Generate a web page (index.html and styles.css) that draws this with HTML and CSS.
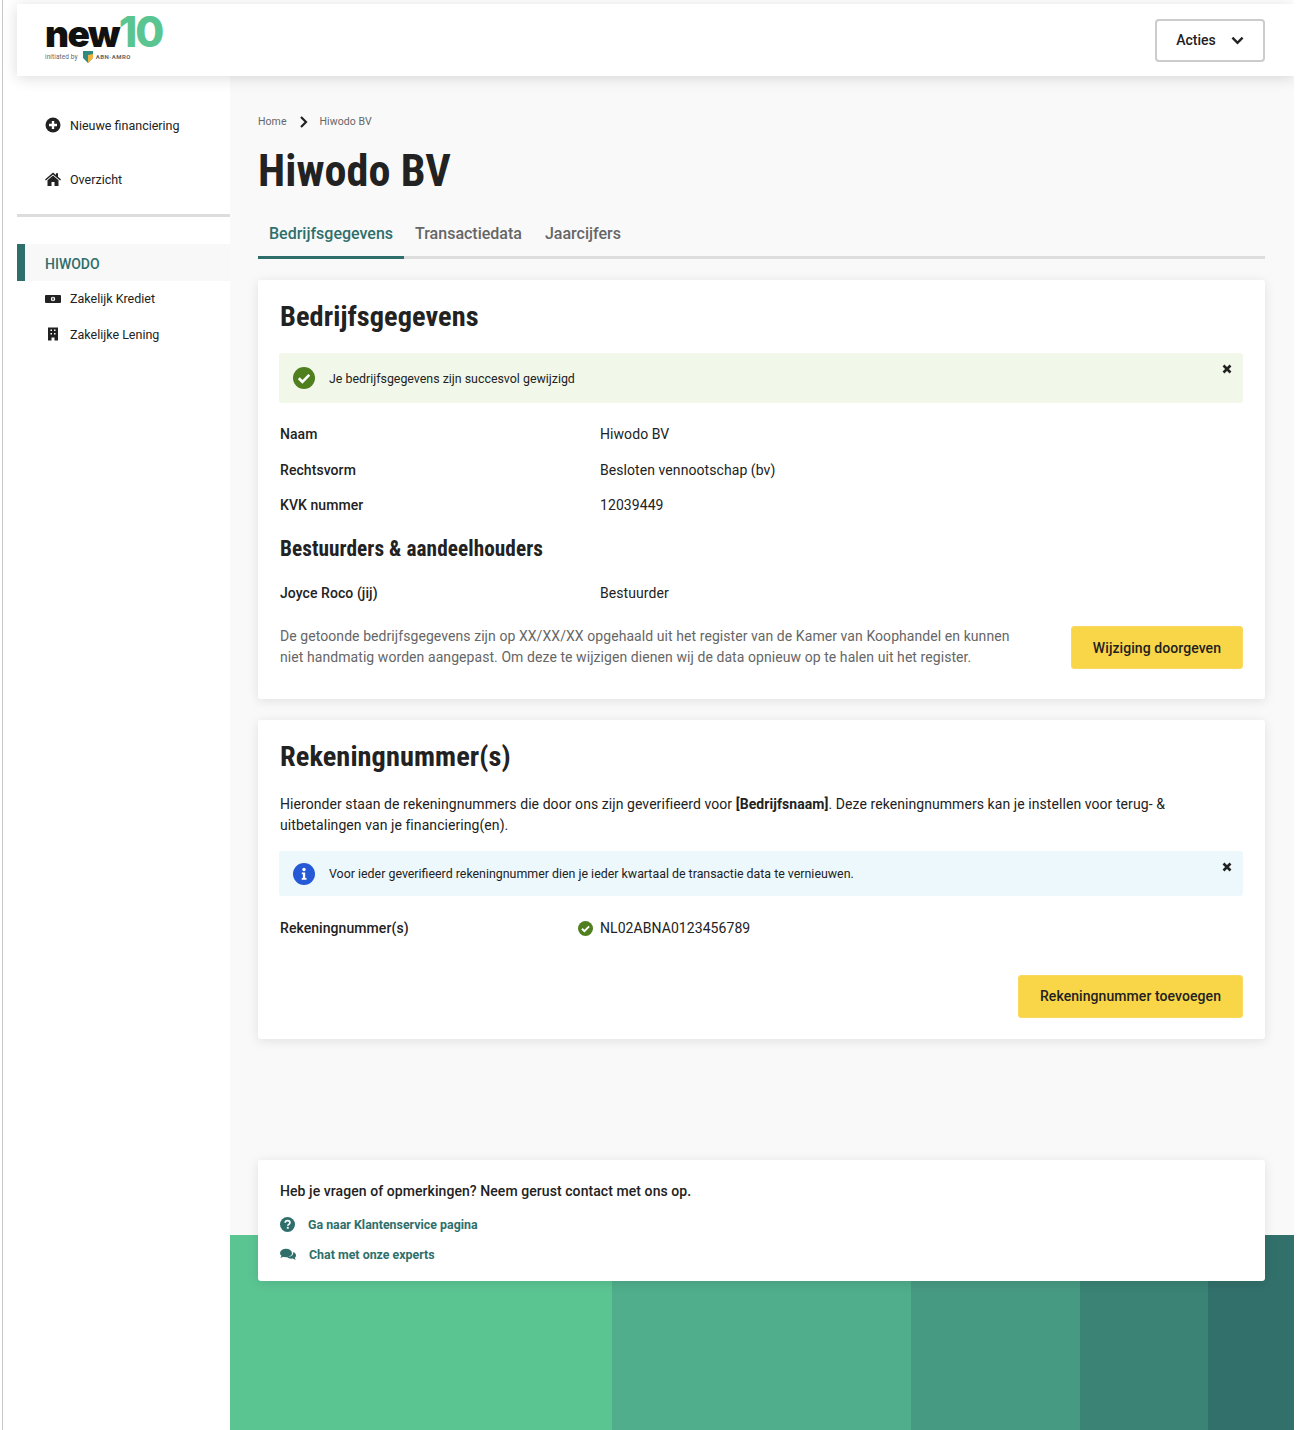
FILE: index.html
```html
<!DOCTYPE html>
<html lang="nl">
<head>
    <meta charset="UTF-8">
    <meta name="viewport" content="width=device-width, initial-scale=1.0">
    <title>Hiwodo BV</title>
    <link rel="stylesheet" href="styles.css">
</head>
<body>
    <div class="page">
        <header class="topbar">
            <a class="logo" href="#">
                <span class="logo-word">new<span class="logo-num">10</span></span>
                <span class="logo-sub">
                    <span>initiated by</span>
                    <svg class="logo-shield" viewBox="0 0 10 12"><path d="M0 0h10v7l-5 5-5-5z" fill="#2f8a80"/><path d="M5 4l5-1v4l-5 5z" fill="#f3b23b"/></svg>
                    <span class="logo-abn">ABN·AMRO</span>
                </span>
            </a>
            <button class="actions-btn">
                Acties
                <svg class="chevron" viewBox="0 0 14 9"><path d="M1.500 1.500L7 7l5.500-5.500" fill="none" stroke="#222" stroke-width="2.600"/></svg>
            </button>
        </header>

        <div class="layout">
            <aside class="sidebar">
                <nav class="nav-top">
                    <a class="nav-link" href="#">
                        <svg class="nav-icon" viewBox="0 0 16 16"><circle cx="8" cy="8" r="7.500" fill="#222"/><path d="M8 4v8M4 8h8" stroke="#fff" stroke-width="2.400"/></svg>
                        Nieuwe financiering
                    </a>
                    <a class="nav-link" href="#">
                        <svg class="nav-icon" viewBox="0 0 16 14"><path d="M8 0.500L0 7.400l.9 1L8 2.400l7.100 6 .9-1-3-2.600V1.200h-2v1.900z" fill="#222"/><path d="M8 3.600L2.500 8.300V14h4v-4h3v4h4V8.300z" fill="#222"/></svg>
                        Overzicht
                    </a>
                </nav>
                <div class="company-head">HIWODO</div>
                <a class="sub-link" href="#">
                    <svg class="nav-icon" viewBox="0 0 16 9"><rect width="16" height="8" y=".5" rx="1" fill="#222"/><circle cx="8" cy="4.500" r="2.200" fill="#fff"/><rect x="7.400" y="3.200" width="1.200" height="2.600" fill="#222"/></svg>
                    Zakelijk Krediet
                </a>
                <a class="sub-link" href="#">
                    <svg class="nav-icon" viewBox="0 0 16 13"><path d="M3 0h10v13H9.500v-3h-3v3H3z" fill="#222"/><path d="M5.500 2h1.500v1.500H5.500zM9 2h1.500v1.500H9zM5.500 5.500h1.500V7H5.500zM9 5.500h1.500V7H9z" fill="#fff"/></svg>
                    Zakelijke Lening
                </a>
            </aside>

            <main class="main">
                <div class="content">
                    <div class="breadcrumb">
                        <span>Home</span>
                        <svg class="crumb-sep" viewBox="0 0 8 12"><path d="M1.500 1l5 5-5 5" fill="none" stroke="#222" stroke-width="2.200"/></svg>
                        <span>Hiwodo BV</span>
                    </div>
                    <h1 class="page-title">Hiwodo BV</h1>
                    <div class="tabs">
                        <a class="tab active" href="#">Bedrijfsgegevens</a>
                        <a class="tab" href="#">Transactiedata</a>
                        <a class="tab" href="#">Jaarcijfers</a>
                    </div>

                    <section class="card">
                        <h2 class="card-title">Bedrijfsgegevens</h2>
                        <div class="alert alert-success">
                            <svg class="alert-icon" viewBox="0 0 22 22"><circle cx="11" cy="11" r="11" fill="#4f7f1f"/><path d="M5.800 11.300l3.600 3.500 6.900-6.900" fill="none" stroke="#fff" stroke-width="2.600"/></svg>
                            <span>Je bedrijfsgegevens zijn succesvol gewijzigd</span>
                            <svg class="alert-close" viewBox="0 0 10 10"><path d="M1.500 1.500l7 7M8.500 1.500l-7 7" stroke="#222" stroke-width="2.600"/></svg>
                        </div>
                        <div class="row"><span class="row-label">Naam</span><span>Hiwodo BV</span></div>
                        <div class="row"><span class="row-label">Rechtsvorm</span><span>Besloten vennootschap (bv)</span></div>
                        <div class="row"><span class="row-label">KVK nummer</span><span>12039449</span></div>
                        <h3 class="sub-title">Bestuurders &amp; aandeelhouders</h3>
                        <div class="row"><span class="row-label">Joyce Roco (jij)</span><span>Bestuurder</span></div>
                        <div class="note-row">
                            <p class="note">De getoonde bedrijfsgegevens zijn op XX/XX/XX opgehaald uit het register van de Kamer van Koophandel en kunnen niet handmatig worden aangepast. Om deze te wijzigen dienen wij de data opnieuw op te halen uit het register.</p>
                            <button class="btn-yellow">Wijziging doorgeven</button>
                        </div>
                    </section>

                    <section class="card card-accounts">
                        <h2 class="card-title">Rekeningnummer(s)</h2>
                        <p class="intro">Hieronder staan de rekeningnummers die door ons zijn geverifieerd voor <strong>[Bedrijfsnaam]</strong>. Deze rekeningnummers kan je instellen voor terug- &amp; uitbetalingen van je financiering(en).</p>
                        <div class="alert alert-info">
                            <svg class="alert-icon" viewBox="0 0 22 22"><circle cx="11" cy="11" r="11" fill="#2559d6"/><circle cx="11" cy="6.500" r="1.700" fill="#fff"/><path d="M8.800 9.500h3.400v5.500h1.300v1.800H8.700V15h1.200v-3.700H8.800z" fill="#fff"/></svg>
                            <span>Voor ieder geverifieerd rekeningnummer dien je ieder kwartaal de transactie data te vernieuwen.</span>
                            <svg class="alert-close" viewBox="0 0 10 10"><path d="M1.500 1.500l7 7M8.500 1.500l-7 7" stroke="#222" stroke-width="2.600"/></svg>
                        </div>
                        <div class="row"><span class="row-label">Rekeningnummer(s)</span>
                            <span class="account">
                                <svg class="account-check" viewBox="0 0 22 22"><circle cx="11" cy="11" r="11" fill="#4f7f1f"/><path d="M5.800 11.300l3.600 3.500 6.900-6.900" fill="none" stroke="#fff" stroke-width="2.800"/></svg>
                                NL02ABNA0123456789
                            </span>
                        </div>
                        <div class="card-actions">
                            <button class="btn-yellow">Rekeningnummer toevoegen</button>
                        </div>
                    </section>
                </div>

                <footer class="footer">
                    <div class="contact">
                        <p class="contact-title">Heb je vragen of opmerkingen? Neem gerust contact met ons op.</p>
                        <a class="contact-link" href="#">
                            <svg class="contact-icon" viewBox="0 0 16 16"><circle cx="8" cy="8" r="8" fill="#2f6f6b"/><path d="M5.500 6.200C5.600 4.700 6.700 3.800 8.100 3.800c1.400 0 2.500.9 2.500 2.200 0 1.800-2.300 1.800-2.300 3.300" fill="none" stroke="#fff" stroke-width="1.800"/><rect x="7.300" y="10.500" width="2" height="2" fill="#fff"/></svg>
                            Ga naar Klantenservice pagina
                        </a>
                        <a class="contact-link" href="#">
                            <svg class="contact-icon contact-icon-wide" viewBox="0 0 16 12"><ellipse cx="6" cy="4.500" rx="6" ry="4.300" fill="#2f6f6b"/><path d="M1.500 7l-1 2.500L4 8z" fill="#2f6f6b"/><path d="M13.300 3.600c1.700.7 2.700 1.900 2.700 3.300 0 1-.5 1.800-1.200 2.400l.9 2.200-3-1.500c-2.200.4-4.400-.1-5.500-1.500 3.300.1 6.500-1.800 6.100-4.900z" fill="#2f6f6b"/></svg>
                            Chat met onze experts
                        </a>
                    </div>
                    <div class="band">
                        <div class="band-1"></div>
                        <div class="band-2"></div>
                        <div class="band-3"></div>
                        <div class="band-4"></div>
                        <div class="band-5"></div>
                    </div>
                </footer>
            </main>
        </div>
    </div>
</body>
</html>
```

FILE: styles.css
```css
* {
    margin: 0;
    padding: 0;
    box-sizing: border-box;
}

body {
    background-color: #ffffff;
    color: #222222;
    font-family: Roboto, "Liberation Sans", sans-serif;
    font-size: 14px;
    line-height: 21px;
    letter-spacing: 0.07px;
}

a {
    color: inherit;
    text-decoration: none;
}

button {
    font-family: inherit;
    cursor: pointer;
}

.page {
    width: 1292px;
    height: 1430px;
    margin-left: 2px;
    border-left: 1px solid #c8c8c8;
    padding-top: 4px;
    overflow: hidden;
}

.topbar {
    height: 72px;
    margin-left: 14px;
    background-color: #ffffff;
    box-shadow: 0 2px 14px rgba(0, 0, 0, 0.14);
    display: flex;
    justify-content: space-between;
    align-items: center;
    padding: 0 29px 0 28px;
    position: relative;
    z-index: 2;
}

.logo {
    display: flex;
    flex-direction: column;
    margin-top: -4px;
}

.logo-word {
    font-family: Inter, Roboto, sans-serif;
    font-weight: 900;
    font-size: 37px;
    line-height: 36px;
    letter-spacing: -1.600px;
    color: #111111;
}

.logo-num {
    color: #5bc592;
    font-weight: 800;
    font-size: 42px;
    letter-spacing: -2px;
}

.logo-sub {
    display: flex;
    align-items: center;
    gap: 5px;
    font-size: 6.500px;
    line-height: 10px;
    letter-spacing: 0.1px;
    color: #666666;
    margin-top: -1px;
}

.logo-shield {
    width: 10px;
    height: 12px;
}

.logo-abn {
    font-weight: 700;
    letter-spacing: 0.5px;
    font-size: 6px;
    margin-left: -2px;
}

.actions-btn {
    width: 110px;
    height: 43px;
    background-color: #ffffff;
    border: 2px solid #cccccc;
    border-radius: 4px;
    font-size: 14px;
    font-weight: 500;
    color: #222222;
    display: flex;
    align-items: center;
    justify-content: center;
    gap: 15px;
}

.chevron {
    width: 13px;
    height: 9px;
}

.layout {
    display: flex;
    height: 1354px;
}

.sidebar {
    width: 227px;
    padding-left: 14px;
    flex-shrink: 0;
}

.nav-top {
    padding-top: 22px;
    height: 141px;
    border-bottom: 3px solid #dddddd;
    margin-bottom: 27px;
}

.nav-link {
    display: flex;
    align-items: center;
    height: 54px;
    padding-left: 28px;
    font-size: 12.500px;
    letter-spacing: 0;
}

.nav-icon {
    width: 16px;
    height: 16px;
    margin-right: 9px;
    flex-shrink: 0;
}

.company-head {
    height: 37px;
    background-color: #f8f8f8;
    border-left: 8px solid #2f6f6b;
    padding: 4px 0 0 20px;
    display: flex;
    align-items: center;
    color: #2f6f6b;
    font-weight: 500;
    font-size: 14px;
    letter-spacing: 0;
}

.sub-link {
    display: flex;
    align-items: center;
    height: 35.500px;
    padding-left: 28px;
    font-size: 12.500px;
    letter-spacing: 0;
}

.main {
    flex: 1;
    background-color: #f9f9f9;
    display: flex;
    flex-direction: column;
}

.content {
    padding: 31px 29px 0 28px;
    height: 1084px;
}

.breadcrumb {
    display: flex;
    align-items: center;
    gap: 12px;
    font-size: 10.500px;
    line-height: 30px;
    color: #666666;
}

.crumb-sep {
    width: 9px;
    height: 12px;
}

.page-title {
    font-family: "Roboto Condensed", "Liberation Sans Narrow", Roboto, sans-serif;
    font-stretch: condensed;
    font-size: 44.200px;
    line-height: 52px;
    font-weight: 700;
    margin-top: 8px;
}

.tabs {
    display: flex;
    margin-top: 17px;
    border-bottom: 3px solid #dddddd;
    height: 45px;
}

.tab {
    padding: 0 11px;
    height: 45px;
    line-height: 40px;
    font-size: 16px;
    font-weight: 500;
    letter-spacing: 0;
    color: #666666;
    margin-right: 1px;
}

.tab.active {
    color: #2f6f6b;
    border-bottom: 3px solid #2f6f6b;
    margin-right: 0;
}

.card {
    background-color: #ffffff;
    border-radius: 3px;
    box-shadow: 0 2px 12px rgba(0, 0, 0, 0.1);
    margin-top: 21px;
    padding: 19px 22px 30px 22px;
}

.card-title {
    font-family: "Roboto Condensed", "Liberation Sans Narrow", Roboto, sans-serif;
    font-stretch: condensed;
    font-size: 28.350px;
    line-height: 36px;
    font-weight: 700;
}

.sub-title {
    font-family: "Roboto Condensed", "Liberation Sans Narrow", Roboto, sans-serif;
    font-stretch: condensed;
    font-size: 21.250px;
    line-height: 28px;
    font-weight: 700;
    margin-top: 11px;
    margin-bottom: 13px;
}

.alert {
    display: flex;
    align-items: center;
    position: relative;
    border-radius: 3px;
    padding: 0 14px;
    font-size: 12.400px;
    letter-spacing: 0;
    margin: 18px 0 14px -1px;
}

.alert-success {
    background-color: #f1f8ea;
    height: 50px;
}

.alert-info {
    background-color: #edf8fd;
    height: 45px;
    margin-top: 15px;
    margin-bottom: 15px;
}

.alert-icon {
    width: 22px;
    height: 22px;
    margin-right: 14px;
    flex-shrink: 0;
}

.alert-close {
    position: absolute;
    right: 11px;
    top: 11px;
    width: 10px;
    height: 10px;
}

.row {
    display: flex;
    height: 35.500px;
    align-items: center;
}

.row-label {
    width: 320px;
    font-weight: 500;
}

.account {
    display: flex;
    align-items: center;
}

.account-check {
    width: 15px;
    height: 15px;
    margin-left: -22px;
    margin-right: 7px;
}

.note-row {
    display: flex;
    align-items: center;
    justify-content: space-between;
    margin-top: 15px;
}

.note {
    width: 740px;
    color: #666666;
    margin-top: -1px;
}

.btn-yellow {
    height: 43px;
    padding: 0 21px;
    background-color: #f9d548;
    border: 1px solid #f9d95f;
    border-radius: 3px;
    font-size: 14px;
    font-weight: 500;
    letter-spacing: 0.07px;
    color: #222222;
}

.card-accounts {
    padding-bottom: 21px;
}

.intro {
    margin-top: 19px;
    width: 900px;
}

.card-actions {
    display: flex;
    justify-content: flex-end;
    margin-top: 28px;
}

.footer {
    flex: 1;
    display: flex;
    flex-direction: column;
}

.contact {
    margin: 0 29px 0 28px;
    height: 121px;
    background-color: #ffffff;
    border-radius: 3px;
    box-shadow: 0 2px 12px rgba(0, 0, 0, 0.1);
    padding: 21px 22px;
    position: relative;
    z-index: 1;
}

.contact-title {
    font-weight: 500;
    margin-bottom: 7px;
}

.contact-link {
    display: flex;
    align-items: center;
    height: 30px;
    font-size: 12.400px;
    font-weight: 700;
    letter-spacing: 0;
    color: #2f6f6b;
}

.contact-icon {
    width: 15px;
    height: 15px;
    margin-right: 13px;
}

.contact-icon-wide {
    width: 16px;
}

.band {
    flex: 1;
    display: flex;
    margin-top: -46px;
}

.band-1 { width: 382px; background-color: #5bc592; }
.band-2 { width: 299px; background-color: #50ae8c; }
.band-3 { width: 169px; background-color: #479a82; }
.band-4 { width: 128px; background-color: #3a8375; }
.band-5 { flex: 1; background-color: #32706b; }
```
